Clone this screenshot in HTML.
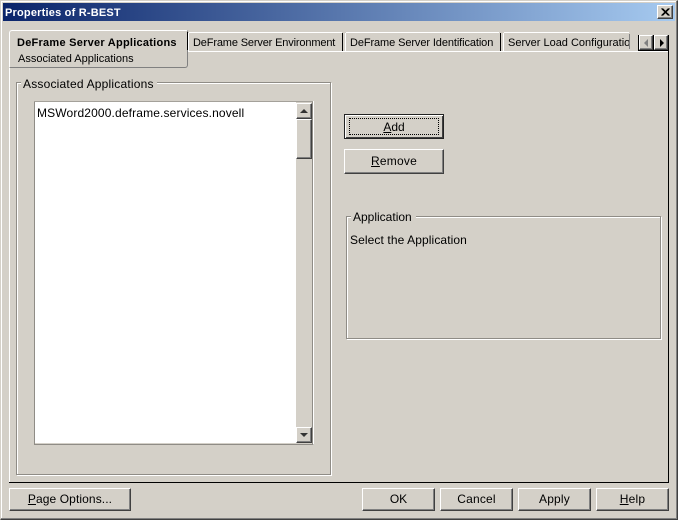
<!DOCTYPE html>
<html><head><meta charset="utf-8"><style>
html,body{margin:0;padding:0;width:678px;height:520px;overflow:hidden;background:#d4d0c8}
*{box-sizing:border-box}
div,span.t{position:absolute}
.t{font:11px/14px "Liberation Sans",sans-serif;color:#000;white-space:nowrap;letter-spacing:0}
.btn{background:#d4d0c8;border-style:solid;border-width:1px;border-color:#fff #404040 #404040 #fff;box-shadow:inset -1px -1px 0 #808080}
.c{text-align:center}
u{text-decoration:underline}
.w{background:#fff}.g{background:#808080}.k{background:#000}.e{background:#a4a19a}
.f12{font-size:12px}
</style></head><body>
<div style="left:0;top:0;width:678px;height:520px;border:1px solid;border-color:#d4d0c8 #404040 #404040 #d4d0c8"></div>
<div class="w" style="left:1px;top:1px;width:675px;height:1px"></div>
<div class="w" style="left:1px;top:1px;width:1px;height:517px"></div>
<div class="g" style="left:676px;top:1px;width:1px;height:518px"></div>
<div class="g" style="left:1px;top:518px;width:676px;height:1px"></div>

<div style="left:3px;top:3px;width:672px;height:18px;background:linear-gradient(90deg,#0a246a,#a6caf0)"></div>
<span class="t" style="left:5px;top:6px;color:#fff;font-weight:bold;letter-spacing:.2px">Properties of R-BEST</span>
<div class="btn" style="left:657px;top:5px;width:16px;height:14px"></div>
<svg style="position:absolute;left:657px;top:5px" width="16" height="14"><path d="M4.5 3.5L11.5 10.500M5.500 3.500L12.500 10.500M11.500 3.500L4.500 10.500M12.500 3.500L5.500 10.500" stroke="#000" stroke-width="1" fill="none"/></svg>

<!-- panel -->
<div class="w" style="left:187px;top:51px;width:482px;height:1px"></div>
<div class="w" style="left:9px;top:67px;width:1px;height:416px"></div>
<div class="k" style="left:668px;top:51px;width:1px;height:432px"></div>
<div class="k" style="left:9px;top:482px;width:660px;height:1px"></div>

<!-- inactive tabs -->
<div class="w" style="left:189px;top:32px;width:153px;height:1px"></div>
<div class="w" style="left:188px;top:33px;width:1px;height:18px"></div>
<div class="k" style="left:342px;top:33px;width:1px;height:18px"></div>
<span class="t" style="left:193px;top:36px;letter-spacing:-.15px">DeFrame Server Environment</span>
<div class="w" style="left:346px;top:32px;width:153px;height:1px"></div>
<div class="w" style="left:345px;top:33px;width:1px;height:18px"></div>
<div class="k" style="left:500px;top:33px;width:1px;height:18px"></div>
<span class="t" style="left:350px;top:36px;letter-spacing:-.1px">DeFrame Server Identification</span>
<div class="w" style="left:504px;top:32px;width:125px;height:1px"></div>
<div class="w" style="left:503px;top:33px;width:1px;height:18px"></div>
<div style="left:508px;top:36px;width:121px;height:14px;overflow:hidden"><span class="t" style="left:0;top:0">Server Load Configuration</span></div>
<div class="g" style="left:629px;top:34px;width:1px;height:15px"></div>

<!-- tab scroll -->
<div style="left:638px;top:35px;width:31px;height:16px;background:#000"></div>
<div class="btn" style="left:639px;top:35px;width:14px;height:15px"></div>
<div class="btn" style="left:654px;top:35px;width:14px;height:15px"></div>
<svg style="position:absolute;left:638px;top:35px" width="31" height="16"><path d="M6 8L10 4V12Z" fill="#808080"/><path d="M22 4L26 8L22 12Z" fill="#000"/></svg>

<!-- active tab -->
<div style="left:9px;top:30px;width:179px;height:38px;background:#d4d0c8;border-radius:3px 0 3px 0;border-style:solid;border-width:1px;border-color:#fff #808080 #808080 #fff;border-bottom-left-radius:0;border-left-color:#fff"></div>
<div class="k" style="left:187px;top:32px;width:1px;height:18px"></div>
<span class="t" style="left:17px;top:36px;font-weight:bold;letter-spacing:.25px">DeFrame Server Applications</span>
<span class="t" style="left:18px;top:52px">Associated Applications</span>

<!-- group 1 -->
<div style="left:16px;top:82px;width:315px;height:393px;border:1px solid #8f8c86;box-shadow:inset 1px 1px 0 #fff,1px 1px 0 #fff"></div>
<div style="left:21px;top:78px;width:136px;height:12px;background:#d4d0c8"></div>
<span class="t f12" style="left:23px;top:77px;letter-spacing:.2px">Associated Applications</span>

<!-- list -->
<div style="left:34px;top:101px;width:280px;height:344px;border:1px solid;border-color:#fff #fff #8f8c86 #8f8c86;background:#d4d0c8;box-shadow:inset -1px 0 0 #8f8c86"></div>
<div class="e" style="left:34px;top:101px;width:279px;height:1px"></div>
<div class="w" style="left:35px;top:102px;width:261px;height:341px"></div>
<span class="t f12" style="left:37px;top:106px;letter-spacing:.14px">MSWord2000.deframe.services.novell</span>
<div class="btn" style="left:296px;top:103px;width:16px;height:16px"></div>
<svg style="position:absolute;left:296px;top:103px" width="16" height="16"><path d="M4 10H12L8 6Z" fill="#333"/></svg>
<div class="btn" style="left:296px;top:119px;width:16px;height:40px;border-left-color:#fff"></div>
<div class="btn" style="left:296px;top:427px;width:16px;height:16px"></div>
<svg style="position:absolute;left:296px;top:427px" width="16" height="16"><path d="M4 6H12L8 10Z" fill="#333"/></svg>

<!-- right buttons -->
<div class="btn" style="left:344px;top:114px;width:100px;height:25px;border:1px solid #222;box-shadow:inset 1px 1px 0 #fff,inset -1px -1px 0 #404040"></div>
<div style="left:349px;top:118px;width:90px;height:17px;border:1px dotted #000"></div>
<span class="t f12 c" style="left:344px;top:120px;width:100px"><u>A</u>dd</span>
<div class="btn" style="left:344px;top:149px;width:100px;height:25px"></div>
<span class="t f12 c" style="left:344px;top:154px;width:100px;letter-spacing:.2px"><u>R</u>emove</span>

<!-- group 2 -->
<div style="left:346px;top:216px;width:315px;height:123px;border:1px solid #8f8c86;box-shadow:inset 1px 1px 0 #fff,1px 1px 0 #fff"></div>
<div style="left:351px;top:212px;width:65px;height:12px;background:#d4d0c8"></div>
<span class="t f12" style="left:353px;top:210px">Application</span>
<span class="t f12" style="left:350px;top:233px;letter-spacing:.1px">Select the Application</span>

<!-- bottom buttons -->
<div class="btn" style="left:9px;top:488px;width:122px;height:23px"></div>
<span class="t f12 c" style="left:9px;top:492px;width:122px;letter-spacing:.1px"><u>P</u>age Options...</span>
<div class="btn" style="left:362px;top:488px;width:73px;height:23px"></div>
<span class="t f12 c" style="left:362px;top:492px;width:73px">OK</span>
<div class="btn" style="left:440px;top:488px;width:73px;height:23px"></div>
<span class="t f12 c" style="left:440px;top:492px;width:73px;letter-spacing:.2px">Cancel</span>
<div class="btn" style="left:518px;top:488px;width:73px;height:23px"></div>
<span class="t f12 c" style="left:518px;top:492px;width:73px;letter-spacing:.2px">Apply</span>
<div class="btn" style="left:596px;top:488px;width:73px;height:23px"></div>
<span class="t f12 c" style="left:596px;top:492px;width:73px;letter-spacing:.2px"><u>H</u>elp</span>
</body></html>
